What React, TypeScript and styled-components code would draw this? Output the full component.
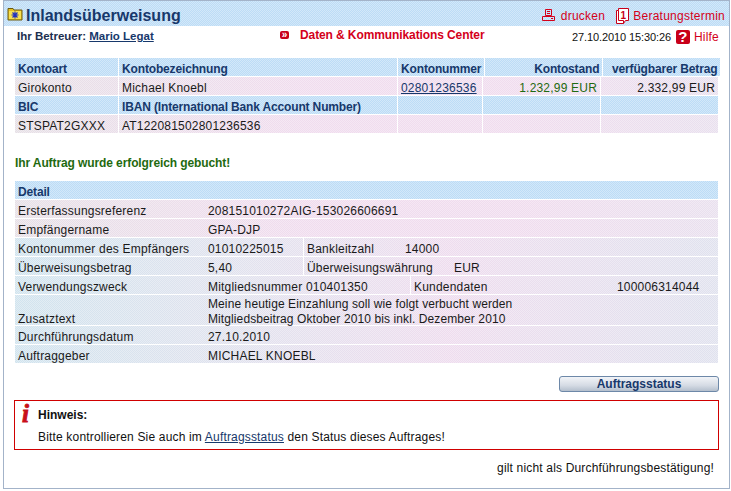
import styled, { createGlobalStyle } from "styled-components";

const GlobalStyle = createGlobalStyle`
  html, body {
    margin: 0;
    padding: 0;
    background: #ffffff;
  }
  body {
    font-family: "Liberation Sans", Arial, sans-serif;
    font-size: 12px;
    color: #1a1a1a;
  }
`;

const dither = `repeating-conic-gradient(rgba(255,255,255,0.35) 0 25%, rgba(255,255,255,0) 0 50%) 0 0 / 2px 2px`;

const tones = {
  pink: "linear-gradient(90deg, #e6e0e6 0, #f0dcee 300px, #f0dcee 520px, #e8e0ee 731px)",
  blue: "linear-gradient(90deg, #d0e4ee 0, #e2e2ee 250px, #eedcee 450px, #dfe2ee 731px)",
};

const Frame = styled.div`
  box-sizing: border-box;
  width: 727px;
  height: 489px;
  margin-left: 3px;
  border: 1px solid #a3b3c9;
  background: #ffffff;
`;

const TitleBar = styled.div`
  height: 25px;
  display: flex;
  align-items: center;
  padding: 0 4px 0 3px;
  background: ${dither}, #bcdcf6;
`;

const Title = styled.h1`
  margin: 0 0 0 3px;
  padding-top: 4px;
  font-size: 16px;
  font-weight: bold;
  color: #17386b;
  flex: 1;
`;

const RedAction = styled.a<{ $gap: number }>`
  display: flex;
  align-items: center;
  gap: ${(p) => p.$gap}px;
  margin-left: 11px;
  padding-top: 4px;
  font-size: 12px;
  letter-spacing: 0.25px;
  color: #d4001a;
`;

const InfoBar = styled.div`
  height: 20px;
  display: flex;
  align-items: center;
  padding: 0 10px 0 13px;
`;

const Advisor = styled.div`
  width: 263px;
  font-size: 11.5px;
  font-weight: bold;
  color: #1c2f4f;
`;

const AdvisorLink = styled.a`
  color: #17386b;
  text-decoration: underline;
`;

const CenterLink = styled.div`
  flex: 1;
  display: flex;
  align-items: center;
  gap: 11px;
  font-size: 12px;
  font-weight: bold;
  letter-spacing: -0.1px;
  color: #d4001a;
  margin-top: -3px;
`;

const Badge = styled.span`
  width: 9px;
  height: 8px;
  background: #c8001a;
  color: #ffffff;
  font-size: 10px;
  line-height: 7px;
  text-align: center;
  border-radius: 2px;
`;

const Stamp = styled.div`
  margin-top: 2px;
  font-size: 11px;
  letter-spacing: -0.1px;
  color: #111111;
  white-space: nowrap;
`;

const HelpLink = styled.div`
  display: flex;
  align-items: center;
  gap: 4px;
  margin: 2px 0 0 5px;
  font-size: 12px;
  letter-spacing: 0.2px;
  color: #d4001a;
`;

const HelpIcon = styled.span`
  width: 14px;
  height: 14px;
  border-radius: 2px;
  background: #c8001a;
  color: #ffffff;
  font-size: 15px;
  font-weight: bold;
  line-height: 14px;
  text-align: center;
`;

const Content = styled.div`
  padding: 12px 0 0 11px;
  width: 703px;
`;

const Rows = styled.div`
  display: flex;
  flex-direction: column;
  gap: 1px;
`;

const Row = styled.div`
  display: flex;
  gap: 1px;
`;

const Cell = styled.div<{
  $w: number;
  $head?: boolean;
  $right?: boolean;
  $tall?: boolean;
  $tone?: keyof typeof tones;
}>`
  box-sizing: border-box;
  flex: 0 0 ${(p) => p.$w}px;
  height: ${(p) => (p.$tall ? "30px" : "18px")};
  display: flex;
  align-items: ${(p) => (p.$tall ? "flex-start" : "center")};
  justify-content: ${(p) => (p.$right ? "flex-end" : "flex-start")};
  padding: ${(p) => (p.$tall ? "2px" : "4px")} 3px 0 3px;
  font-size: 12px;
  line-height: ${(p) => (p.$tall ? "15px" : "normal")};
  font-weight: ${(p) => (p.$head ? "bold" : "normal")};
  letter-spacing: ${(p) => (p.$head ? "-0.15px" : "0.2px")};
  color: ${(p) => (p.$head ? "#17386b" : "#1a1a1a")};
  white-space: nowrap;
  background: ${(p) =>
    p.$head ? `${dither}, #bcdcf6` : `${dither}, ${tones[p.$tone ?? "pink"]}`};
  background-attachment: scroll, ${(p) => (p.$head ? "scroll" : "fixed")};
`;

const Money = styled.span`
  color: #1f6a10;
`;

const TextLink = styled.a`
  color: #17386b;
  text-decoration: underline;
`;

const Success = styled.div`
  margin: 23px 0 11px;
  font-size: 12px;
  font-weight: bold;
  letter-spacing: -0.1px;
  line-height: 14px;
  color: #1f6a10;
`;

const Label = styled.span<{ $w: number }>`
  flex: 0 0 ${(p) => p.$w}px;
`;

const Lines = styled.span`
  letter-spacing: 0.1px;
`;

const ButtonRow = styled.div`
  display: flex;
  justify-content: flex-end;
  margin: 13px -1px 0 0;
`;

const StatusButton = styled.button`
  width: 160px;
  height: 16px;
  padding: 0;
  border: 1px solid #6d88a8;
  border-radius: 3px;
  background: linear-gradient(180deg, #f2f4f8 0, #d5dbe4 60%, #b4bfcd 100%);
  font-family: inherit;
  font-size: 12px;
  font-weight: bold;
  line-height: 13px;
  color: #17386b;
`;

const Notice = styled.div`
  box-sizing: border-box;
  height: 50px;
  margin: 8px 0 0 -1px;
  width: 705px;
  border: 1px solid #d00000;
  padding: 4px 0 0 5px;
  display: grid;
  grid-template-columns: 18px 1fr;
`;

const NoticeMark = styled.span`
  font-family: "Liberation Serif", serif;
  font-size: 25px;
  font-style: italic;
  font-weight: bold;
  line-height: 17px;
  color: #c8101a;
  text-align: left;
  margin-left: 2px;
  -webkit-text-stroke: 0.9px #c8101a;
`;

const NoticeTitle = styled.div`
  font-size: 12px;
  font-weight: bold;
  line-height: 20px;
  color: #111111;
`;

const NoticeText = styled.div`
  grid-column: 2;
  font-size: 12px;
  letter-spacing: 0.17px;
  line-height: 20px;
  color: #111111;
`;

const Footnote = styled.div`
  margin-top: 11px;
  padding-right: 4px;
  text-align: right;
  font-size: 12px;
  letter-spacing: 0.17px;
  line-height: 15px;
  color: #111111;
`;

const FolderIcon = () => (
  <svg width="16" height="14" viewBox="0 0 16 14">
    <path d="M1 3V1.5h5L7 3h8v10H1z" fill="#e8c020" stroke="#6b5a10" />
    <rect x="2" y="4" width="12" height="8" fill="#f8e050" />
    <path d="M8 4.5v7M4.5 8h7M5.5 5.5l5 5M10.5 5.5l-5 5" stroke="#2030c0" strokeWidth="1.2" />
  </svg>
);

const PrintIcon = () => (
  <svg width="13" height="13" viewBox="0 0 13 13" fill="none" stroke="#d4001a">
    <path d="M3.5 .5h6v6h-6zM5 2.5h3M5 4.5h3" />
    <path d="M.5 7.5h12v4H.5zM9 9.5h2" />
  </svg>
);

const CalendarIcon = () => (
  <svg width="13" height="16" viewBox="0 0 13 16">
    <path d="M.5 2.5h2v-2h10v12h-3l-2 3h-7z" fill="#ffffff" stroke="#c8001a" />
    <path d="M2.5 2.5v10h5v3" fill="none" stroke="#c8001a" />
    <text x="7.5" y="10.5" fontSize="10" fontWeight="bold" fill="#c8001a" textAnchor="middle" fontFamily="Liberation Sans">1</text>
  </svg>
);

const App = () => {
  return (
    <>
      <GlobalStyle />
      <Frame>
        <TitleBar>
          <FolderIcon />
          <Title>Inlandsüberweisung</Title>
          <RedAction $gap={6}>
            <PrintIcon />
            drucken
          </RedAction>
          <RedAction $gap={4}>
            <CalendarIcon />
            Beratungstermin
          </RedAction>
        </TitleBar>
        <InfoBar>
          <Advisor>
            Ihr Betreuer: <AdvisorLink>Mario Legat</AdvisorLink>
          </Advisor>
          <CenterLink>
            <Badge>»</Badge>
            Daten &amp; Kommunikations Center
          </CenterLink>
          <Stamp>27.10.2010 15:30:26</Stamp>
          <HelpLink>
            <HelpIcon>?</HelpIcon>
            Hilfe
          </HelpLink>
        </InfoBar>
        <Content>
          <Rows>
            <Row>
              <Cell $w={103} $head>Kontoart</Cell>
              <Cell $w={278} $head>Kontobezeichnung</Cell>
              <Cell $w={84} $head>Kontonummer</Cell>
              <Cell $w={117} $head $right>Kontostand</Cell>
              <Cell $w={117} $head $right>verfügbarer Betrag</Cell>
            </Row>
            <Row>
              <Cell $w={103}>Girokonto</Cell>
              <Cell $w={278}>Michael Knoebl</Cell>
              <Cell $w={84}><TextLink>02801236536</TextLink></Cell>
              <Cell $w={117} $right><Money>1.232,99 EUR</Money></Cell>
              <Cell $w={117} $right>2.332,99 EUR</Cell>
            </Row>
            <Row>
              <Cell $w={103} $head>BIC</Cell>
              <Cell $w={278} $head>IBAN (International Bank Account Number)</Cell>
              <Cell $w={84} $head />
              <Cell $w={117} $head />
              <Cell $w={117} $head />
            </Row>
            <Row>
              <Cell $w={103}>STSPAT2GXXX</Cell>
              <Cell $w={278}>AT122081502801236536</Cell>
              <Cell $w={84} />
              <Cell $w={117} />
              <Cell $w={117} />
            </Row>
          </Rows>

          <Success>Ihr Auftrag wurde erfolgreich gebucht!</Success>

          <Rows>
            <Row><Cell $w={703} $head>Detail</Cell></Row>
            <Row><Cell $w={703}><Label $w={190}>Ersterfassungsreferenz</Label>208151010272AIG-153026606691</Cell></Row>
            <Row><Cell $w={703}><Label $w={190}>Empfängername</Label>GPA-DJP</Cell></Row>
            <Row>
              <Cell $w={288} $tone="blue"><Label $w={190}>Kontonummer des Empfängers</Label>01010225015</Cell>
              <Cell $w={414} $tone="blue"><Label $w={98}>Bankleitzahl</Label>14000</Cell>
            </Row>
            <Row>
              <Cell $w={288} $tone="blue"><Label $w={190}>Überweisungsbetrag</Label>5,40</Cell>
              <Cell $w={414} $tone="blue"><Label $w={147}>Überweisungswährung</Label>EUR</Cell>
            </Row>
            <Row>
              <Cell $w={395} $tone="blue"><Label $w={190}>Verwendungszweck</Label>Mitgliedsnummer 010401350</Cell>
              <Cell $w={307} $tone="blue"><Label $w={203}>Kundendaten</Label>100006314044</Cell>
            </Row>
            <Row>
              <Cell $w={703} $tall $tone="blue">
                <Label $w={190}>
                  <br />
                  Zusatztext
                </Label>
                <Lines>
                  Meine heutige Einzahlung soll wie folgt verbucht werden
                  <br />
                  Mitgliedsbeitrag Oktober 2010 bis inkl. Dezember 2010
                </Lines>
              </Cell>
            </Row>
            <Row><Cell $w={703} $tone="blue"><Label $w={190}>Durchführungsdatum</Label>27.10.2010</Cell></Row>
            <Row><Cell $w={703} $tone="blue"><Label $w={190}>Auftraggeber</Label>MICHAEL KNOEBL</Cell></Row>
          </Rows>

          <ButtonRow>
            <StatusButton>Auftragsstatus</StatusButton>
          </ButtonRow>

          <Notice>
            <NoticeMark>i</NoticeMark>
            <NoticeTitle>Hinweis:</NoticeTitle>
            <NoticeText>
              Bitte kontrollieren Sie auch im <TextLink>Auftragsstatus</TextLink> den Status dieses Auftrages!
            </NoticeText>
          </Notice>

          <Footnote>gilt nicht als Durchführungsbestätigung!</Footnote>
        </Content>
      </Frame>
    </>
  );
};

export default App;
